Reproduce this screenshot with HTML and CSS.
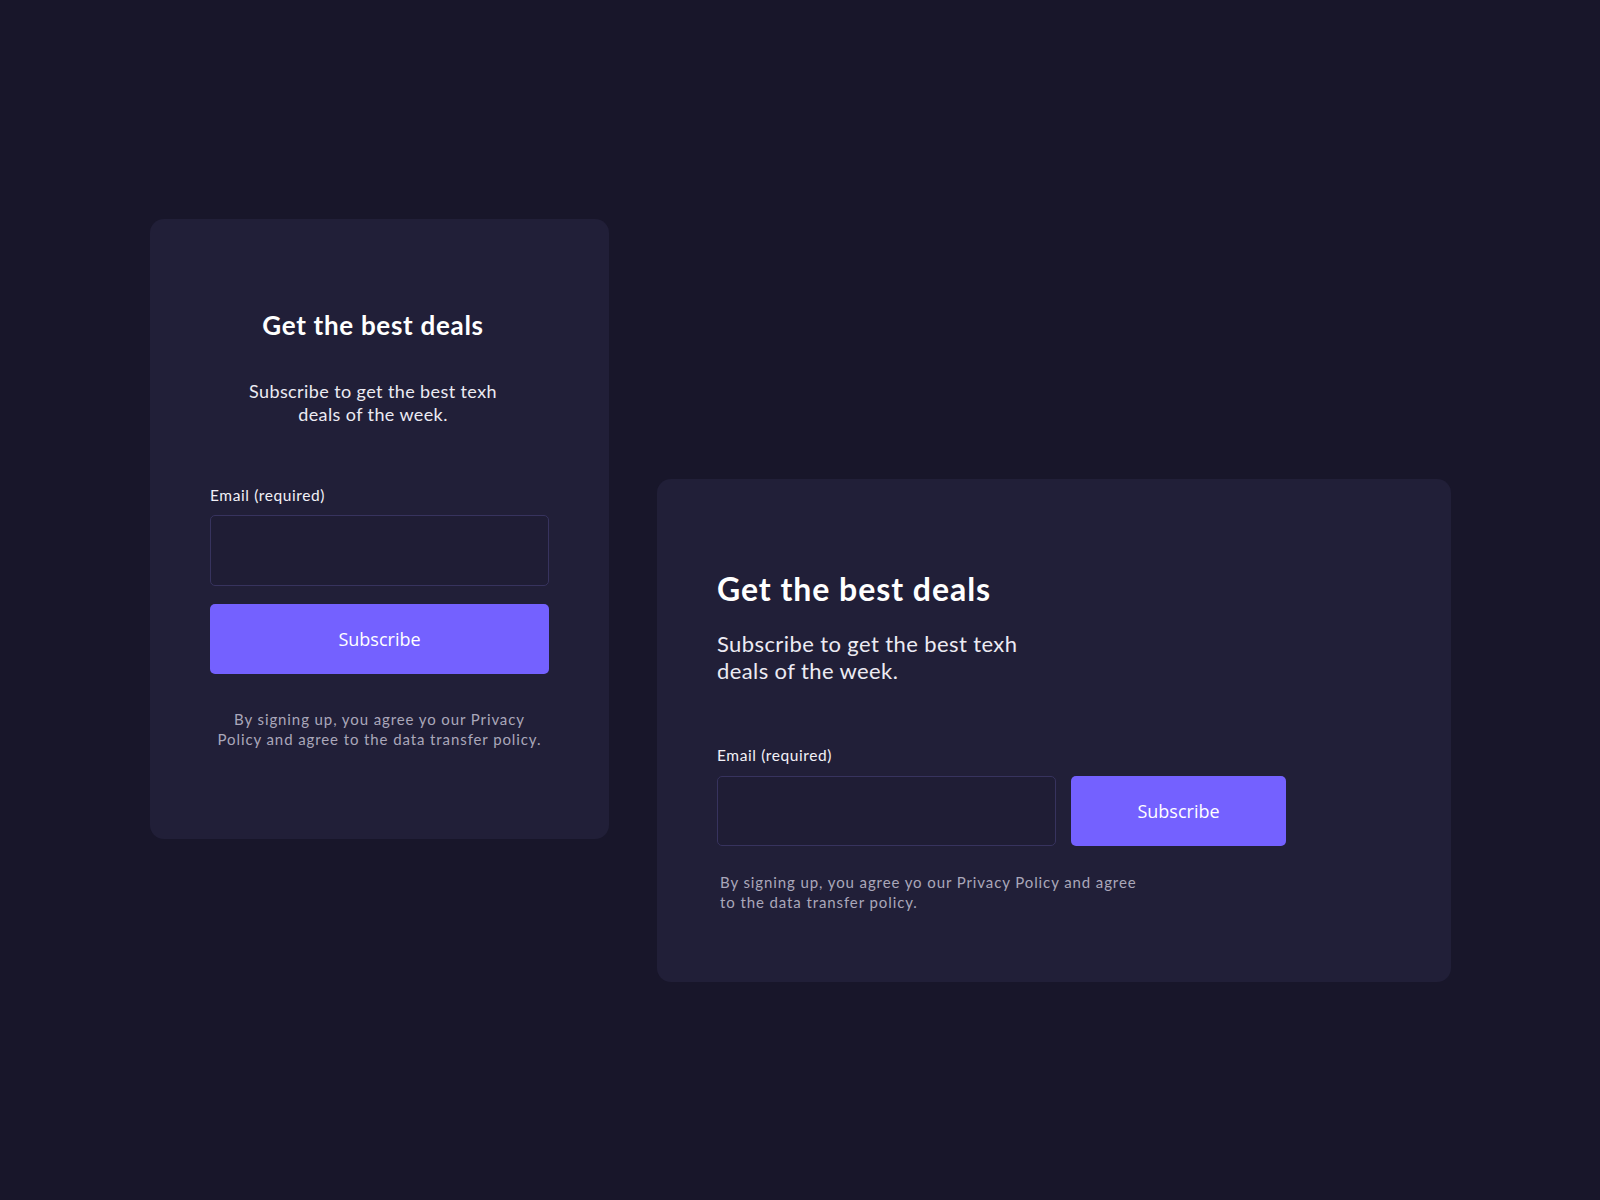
FILE: index.html
```html
<!DOCTYPE html>
<html lang="en">
<head>
<meta charset="utf-8">
<title>Get the best deals</title>
<link rel="stylesheet" href="styles.css">
</head>
<body>
<main class="stage">
  <section class="card card-stacked">
    <div class="head">
      <h2 class="title">Get the best deals</h2>
      <p class="sub">Subscribe to get the best texh deals of the week.</p>
    </div>
    <form class="form">
      <label class="label" for="e1">Email (required)</label>
      <input class="input" id="e1" type="email">
      <button class="btn" type="button">Subscribe</button>
    </form>
    <p class="note">By signing up, you agree yo our Privacy Policy and agree to the data transfer policy.</p>
  </section>

  <section class="card card-wide">
    <div class="head">
      <h2 class="title">Get the best deals</h2>
      <p class="sub">Subscribe to get the best texh deals of the week.</p>
    </div>
    <form class="form">
      <label class="label" for="e2">Email (required)</label>
      <div class="row">
        <input class="input" id="e2" type="email">
        <button class="btn" type="button">Subscribe</button>
      </div>
    </form>
    <p class="note">By signing up, you agree yo our Privacy Policy and agree to the data transfer policy.</p>
  </section>
</main>
</body>
</html>
```
FILE: styles.css
```css
* { box-sizing: border-box; }
html, body { margin: 0; padding: 0; }
body {
  background: #18162a;
  font-family: "Lato", "Open Sans", sans-serif;
  color: #ffffff;
  min-height: 1200px;
}
.stage {
  display: flex;
  align-items: flex-start;
  gap: 48px;
  padding: 219px 0 0 150px;
}
.card {
  background: #211f38;
  border-radius: 14px;
}
.title { margin: 0; font-weight: 700; color: #ffffff; }
.sub { margin: 0; color: #ecebf3; letter-spacing: 0.4px; }
.label {
  display: block;
  font-size: 15.5px;
  line-height: 18px;
  letter-spacing: 0.6px;
  color: #f2f1f7;
}
.input {
  display: block;
  height: 70px;
  background: #1f1d35;
  border: 1.5px solid #37335e;
  border-radius: 5px;
  outline: none;
  padding: 0 16px;
  color: #fff;
  font: inherit;
}
.btn {
  display: block;
  height: 70px;
  border: 0;
  border-radius: 5px;
  background: #7461ff;
  color: #ffffff;
  font-family: "Open Sans", sans-serif;
  font-size: 18px;
}
.note {
  margin: 0;
  font-size: 15px;
  line-height: 20px;
  letter-spacing: 0.9px;
  color: #aaa7ba;
}

/* stacked card */
.card-stacked {
  width: 459px;
  padding: 89px 60px 90px;
}
.card-stacked .head { text-align: center; padding-right: 13px; }
.card-stacked .title { font-size: 26px; line-height: 34px; letter-spacing: 0.7px; }
.card-stacked .sub {
  font-size: 18px; line-height: 23px;
  max-width: 262px; margin: 38px auto 0;
}
.card-stacked .form { margin-top: 60px; }
.card-stacked .input { width: 100%; margin-top: 11px; height: 71px; }
.card-stacked .btn { width: 100%; margin-top: 18px; }
.card-stacked .note { margin: 35px auto 0; max-width: 334px; text-align: center; }

/* wide card */
.card-wide {
  width: 794px;
  margin-top: 260px;
  padding: 90px 60px 70px;
}
.card-wide .title { font-size: 32px; line-height: 40px; letter-spacing: 0.95px; }
.card-wide .sub { font-size: 22px; line-height: 27px; max-width: 330px; margin-top: 21px; }
.card-wide .form { margin-top: 62px; }
.card-wide .row { display: flex; gap: 15px; margin-top: 12px; }
.card-wide .input { width: 339px; }
.card-wide .btn { width: 215px; }
.card-wide .note { margin-top: 26px; padding-left: 3px; max-width: 428px; }
```
